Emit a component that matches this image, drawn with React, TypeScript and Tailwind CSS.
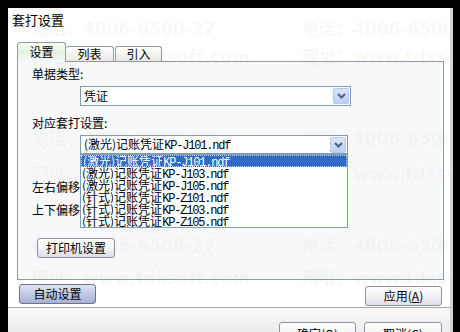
import type { ReactNode } from "react";

const CJK = { fontFamily: '"Noto Sans CJK SC", "Liberation Sans", sans-serif' };

const templates: [string, string][] = [
  ["(激光)记账凭证", "KP-J101.ndf"],
  ["(激光)记账凭证", "KP-J103.ndf"],
  ["(激光)记账凭证", "KP-J105.ndf"],
  ["(针式)记账凭证", "KP-Z101.ndf"],
  ["(针式)记账凭证", "KP-Z103.ndf"],
  ["(针式)记账凭证", "KP-Z105.ndf"],
];

function TemplateName({ cn, file }: { cn: string; file: string }) {
  return (
    <span className="whitespace-nowrap">
      <span className="text-[12px]">{cn}</span>
      <span
        className="text-[12px] tracking-[-1.2px]"
        style={{ fontFamily: '"Liberation Mono", monospace' }}
      >
        {file}
      </span>
    </span>
  );
}

function Chevron() {
  return (
    <svg width="9" height="6" viewBox="0 0 9 6" fill="none">
      <path d="M1 1 L4.5 4.5 L8 1" stroke="#4d6185" strokeWidth="2" />
    </svg>
  );
}

function ComboButton() {
  return (
    <div className="flex h-[16px] w-[16px] shrink-0 items-center justify-center rounded-[2px] border border-[#b6c8ee] bg-gradient-to-b from-[#dbe5fb] to-[#bccff5]">
      <Chevron />
    </div>
  );
}

function XpButton({
  className = "",
  children,
  hot,
}: {
  className?: string;
  children: ReactNode;
  hot?: boolean;
}) {
  return (
    <div
      className={`flex shrink-0 items-center justify-center rounded-[3px] border text-[12px] leading-none text-black ${
        hot
          ? "border-[#6c7391] bg-gradient-to-b from-[#dfe3f3] via-[#c3c9e4] to-[#a9b1d4]"
          : "border-[#8d929e] bg-gradient-to-b from-white via-[#f3f3f6] to-[#dcdde6]"
      } ${className}`}
    >
      {children}
    </div>
  );
}

// faint company watermark painted behind the dialog's controls
function Watermark() {
  const cols = [24, 294];
  const phones = [13, 123, 230];
  const urls = [41, 158, 262];
  return (
    <div
      className="pointer-events-none absolute inset-0 overflow-hidden text-[17px] font-bold leading-none text-black/[0.045]"
      style={{ fontFamily: '"DejaVu Sans", "Noto Sans CJK SC", sans-serif' }}
    >
      {cols.map((x) =>
        phones.map((y) => (
          <div key={`p${x}-${y}`} className="absolute whitespace-nowrap" style={{ left: x, top: y }}>
            电话：4006-6500-27
          </div>
        )),
      )}
      {cols.map((x) =>
        urls.map((y) => (
          <div key={`u${x}-${y}`} className="absolute whitespace-nowrap" style={{ left: x, top: y }}>
            网址：www.tdxsoft.com
          </div>
        )),
      )}
    </div>
  );
}

export default function App() {
  return (
    <div className="h-[332px] w-[460px] overflow-hidden bg-black pl-[8px] pt-[8px]" style={CJK}>
      <div className="relative h-[324px] w-[445px] overflow-hidden border-r-[3px] border-[#d3d3d3] bg-white">
        <Watermark />

        <div className="relative flex h-full flex-col">
          {/* title */}
          <div className="h-[34px] shrink-0 pl-[4px] pt-[4px] text-[13px] leading-[16px] text-black">
            套打设置
          </div>

          {/* tabs */}
          <div className="ml-[9px] flex h-[19px] shrink-0 items-end">
            <div className="relative z-10 -mb-px flex h-[20px] w-[49px] items-start justify-center rounded-t-[3px] border border-b-0 border-[#919b9c] bg-gradient-to-b from-[#fbfdfa] via-[#e2f1dc] to-[#f7f8fa] pt-[2px] text-[12px] leading-[14px]">
              设置
            </div>
            <div className="flex h-[15px] w-[48px] items-center justify-center rounded-t-[3px] border border-b-0 border-l-0 border-[#919b9c] bg-gradient-to-b from-white to-[#e9e8e2] text-[12px] leading-[14px]">
              列表
            </div>
            <div className="ml-px flex h-[15px] w-[47px] items-center justify-center rounded-t-[3px] border border-b-0 border-[#919b9c] bg-gradient-to-b from-white to-[#e9e8e2] text-[12px] leading-[14px]">
              引入
            </div>
          </div>

          {/* panel */}
          <div className="ml-[9px] flex h-[219px] w-[427px] shrink-0 flex-col border border-[#919b9c] bg-[#dfe4ec]/[0.25] text-[12px] leading-[14px]">
            <div className="ml-[14px] mt-[5px] h-[14px]">单据类型:</div>
            <div className="ml-[62px] mt-[5px] flex h-[20px] w-[271px] items-center border border-[#7f9db9] bg-white pl-[3px] pr-[1px]">
              <span className="flex-1">凭证</span>
              <ComboButton />
            </div>

            <div className="ml-[14px] mt-[10px] h-[14px]">对应套打设置:</div>
            <div className="relative z-10 ml-[62px] mt-[5px] h-[19px] w-[268px]">
              <div className="flex h-[19px] items-center border border-[#7f9db9] bg-white pl-[3px] pr-[1px] leading-[12px]">
                <span className="flex-1">
                  <TemplateName cn="(激光)记账凭证" file="KP-J101.ndf" />
                </span>
                <ComboButton />
              </div>
              <div className="absolute left-0 top-full flex w-[268px] flex-col border border-[#7f9db9] bg-white leading-[12px]">
                {templates.map(([cn, file], i) => (
                  <div
                    key={file}
                    className={`h-[12px] overflow-hidden pl-px ${
                      i === 0 ? "border border-dotted border-[#c9d6ee] bg-[#316ac5] text-white" : "text-black"
                    }`}
                  >
                    <div className={i === 0 ? "-mt-px" : ""}>
                      <TemplateName cn={cn} file={file} />
                    </div>
                  </div>
                ))}
              </div>
            </div>

            <div className="ml-[14px] mt-[26px] h-[14px]">左右偏移</div>
            <div className="ml-[14px] mt-[9px] h-[14px]">上下偏移</div>

            <XpButton className="ml-[19px] mt-[21px] h-[20px] w-[78px]">打印机设置</XpButton>
          </div>

          {/* actions */}
          <div className="mt-[4px] flex h-[22px] shrink-0 items-start justify-between pl-[11px] pr-[8px]">
            <XpButton hot className="h-[20px] w-[77px]">
              自动设置
            </XpButton>
            <XpButton className="mt-[2px] h-[20px] w-[77px]">
              应用(<span className="underline">A</span>)
            </XpButton>
          </div>

          <div className="mt-[1px] h-px shrink-0 bg-[#a7a7a7]" />
          <div className="flex min-h-0 flex-1 items-start justify-end gap-[8px] overflow-hidden bg-gradient-to-b from-[#f7f7f7] to-[#ededed] pr-[8px] pt-[14px]">
            <XpButton className="h-[22px] w-[77px] items-start pt-[5px]">
              确定(<span className="underline">O</span>)
            </XpButton>
            <XpButton className="h-[22px] w-[78px] items-start pt-[5px]">
              取消(<span className="underline">C</span>)
            </XpButton>
          </div>
        </div>
      </div>
    </div>
  );
}
